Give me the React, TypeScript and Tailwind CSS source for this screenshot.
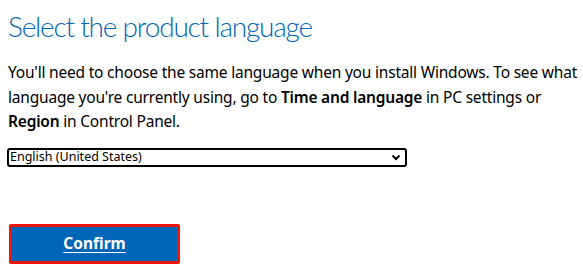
export default function App() {
  return (
    <div className="w-[583px] h-[278px] bg-white overflow-hidden font-['Noto_Sans',sans-serif]">
      <div className="pl-[8px] pt-[8px] flex flex-col items-start">
        <h2 className="font-['Lato',sans-serif] text-[28px] font-light leading-[36px] text-[#0067b8] tracking-[-1.2px]">Select the product language</h2>
        <p className="mt-[16px] text-[15.5px] leading-[24.5px] text-black tracking-[-0.2px]">
          You'll need to choose the same language when you install Windows. To see what
          <br />
          language you're currently using, go to <b className="font-semibold">Time and language</b> in PC settings or
          <br />
          <b className="font-semibold">Region</b> in Control Panel.
        </p>
        <div className="mt-[14px] -ml-[1px] w-[400px] h-[19px] border-2 border-black rounded-[3px] flex items-center justify-between pl-[1px] pr-[4px]">
          <span className="text-[12.5px] leading-none text-black">English (United States)</span>
          <svg width="10" height="7" viewBox="0 0 10 7"><path d="M1.5 1.5 L5 5 L8.5 1.5" fill="none" stroke="black" strokeWidth="2" /></svg>
        </div>
        <div className="mt-[57px] ml-[1px] w-[171px] h-[40px] border-[3px] border-[#f0140c] rounded-[2px] bg-[#0067b8] flex items-center justify-center">
          <span className="text-white font-bold text-[15.5px] underline underline-offset-[3px]">Confirm</span>
        </div>
      </div>
    </div>
  );
}
